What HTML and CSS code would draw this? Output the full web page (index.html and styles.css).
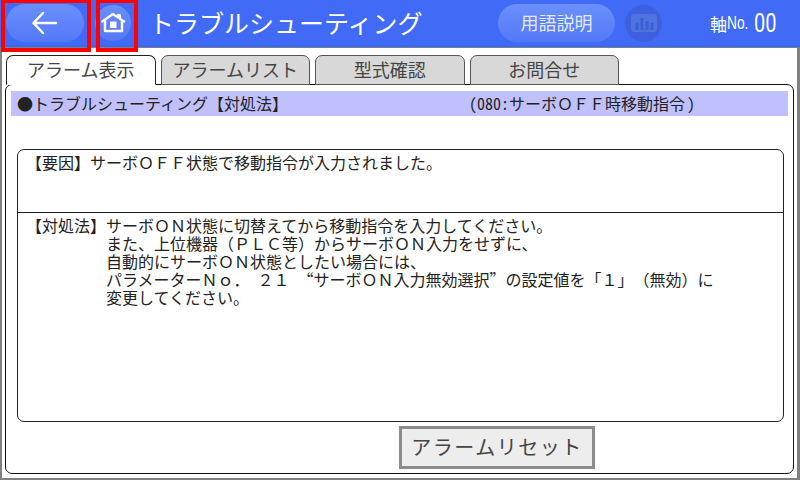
FILE: index.html
```html
<!DOCTYPE html>
<html lang="ja">

<head>
    <meta charset="UTF-8">
    <meta name="viewport" content="width=device-width, initial-scale=1.0">
    <link rel="stylesheet" href="styles.css">
    <title>トラブルシューティング</title>
</head>

<body>

    <div class="screen">
        <div class="header">
            <div class="btnBack">
                <svg width="44" height="30" viewBox="0 0 44 30">
                    <path d="M33 15H11M20 5L10.500 15L20 25" fill="none" stroke="#fff" stroke-width="2.500" stroke-linecap="round" stroke-linejoin="round" />
                </svg>
            </div>
            <div class="btnHome">
                <svg width="30" height="30" viewBox="0 0 30 30">
                    <path d="M3.500 14L15 6L20 9.500V7H22V11L27 14" fill="none" stroke="#fff" stroke-width="2.200" stroke-linejoin="round" />
                    <path d="M7 12.500V23H24V12.500" fill="none" stroke="#fff" stroke-width="2.400" stroke-linejoin="round" />
                    <rect x="12" y="13.500" width="6.500" height="6.500" fill="#fff" />
                </svg>
            </div>
            <div class="title">トラブルシューティング</div>
            <div class="btnWord">用語説明</div>
            <div class="btnChart">
                <svg width="26" height="18" viewBox="0 0 26 18">
                    <rect width="26" height="18" rx="3" fill="#4e72e0" />
                    <path d="M6 9V16M11 4V16M16 7V16M21 9V16" stroke="#3c60d4" stroke-width="3" />
                </svg>
            </div>
            <div class="axis">
                <span class="axisLabel">軸</span>
                <span class="axisNo">No.</span>
                <span class="axisNum">00</span>
            </div>
        </div>

        <div class="mark markBack"></div>
        <div class="mark markHome"></div>

        <div class="tabs">
            <div class="tab active">アラーム表示</div>
            <div class="tab">アラームリスト</div>
            <div class="tab">型式確認</div>
            <div class="tab">お問合せ</div>
        </div>

        <div class="panel">
            <div class="band">
                <span class="bandTitle">●トラブルシューティング【対処法】</span>
                <span class="bandCode"><span class="half">(080:</span>サーボＯＦＦ時移動指令<span class="half close">)</span></span>
            </div>

            <div class="msgBox">
                <div class="cause">【要因】サーボＯＦＦ状態で移動指令が入力されました。</div>
                <div class="remedy">
                    <div class="label">【対処法】</div>
                    <div class="lines">
                        <p>サーボＯＮ状態に切替えてから移動指令を入力してください。</p>
                        <p>また、上位機器（ＰＬＣ等）からサーボＯＮ入力をせずに、</p>
                        <p>自動的にサーボＯＮ状態としたい場合には、</p>
                        <p>パラメーターＮｏ．&ensp;２１&ensp;<span class="full">“</span>サーボＯＮ入力無効選択<span class="full">”</span>の設定値を「１」（無効）に</p>
                        <p>変更してください。</p>
                    </div>
                </div>
            </div>

            <div class="btnReset">アラームリセット</div>
        </div>
    </div>

</body>

</html>
```

FILE: styles.css
```css
* {
    margin: 0;
    padding: 0;
    box-sizing: border-box;
}

body {
    width: 800px;
    height: 480px;
    overflow: hidden;
    background-color: #fff;
    font-family: "Noto Sans CJK JP", sans-serif;
    font-size: 16px;
    color: #222;
    text-spacing-trim: space-all;
}

.screen {
    position: relative;
    width: 800px;
    height: 480px;
    border-left: 2px solid #808080;
    border-right: 3px solid #808080;
    border-bottom: 2px solid #808080;
}

.header {
    display: flex;
    align-items: center;
    height: 48px;
    margin-left: -2px;
    margin-right: -3px;
    padding-bottom: 1px;
    background: linear-gradient(#416bf7 45px, #3568ff 45px);
    border-bottom: 1px solid #808080;
    color: #fff;
}

.btnBack {
    display: flex;
    align-items: center;
    justify-content: center;
    width: 78px;
    height: 38px;
    margin-left: 6px;
    border-radius: 19px;
    background: linear-gradient(#6b8ffb, #5379f8);
}

.btnHome {
    display: flex;
    align-items: center;
    justify-content: center;
    width: 36px;
    height: 36px;
    margin-left: 11px;
    border-radius: 50%;
    background: linear-gradient(#6b8ffb, #5379f8);
}

.title {
    width: 349px;
    margin-left: 18px;
    padding-bottom: 2px;
    font-size: 25px;
    line-height: 32px;
    white-space: nowrap;
}

.btnWord {
    width: 117px;
    height: 38px;
    border-radius: 19px;
    background: linear-gradient(#6b8ffb, #5379f8);
    color: #e4eafe;
    font-size: 18px;
    line-height: 36px;
    text-align: center;
}

.btnChart {
    display: flex;
    align-items: center;
    justify-content: center;
    width: 37px;
    height: 37px;
    margin-left: 10px;
    border-radius: 50%;
    background-color: #3c60e0;
}

.axis {
    display: flex;
    align-items: center;
    margin-left: 48px;
    font-size: 17px;
    white-space: nowrap;
}

.axisNo {
    width: 20px;
    font-family: "Liberation Sans", sans-serif;
    font-size: 19px;
    transform: scaleX(0.72);
    transform-origin: left center;
}

.axisNum {
    width: 24px;
    margin-left: 7px;
    font-family: Roboto, sans-serif;
    font-size: 25px;
    transform: scaleX(0.8);
    transform-origin: left center;
}

/* red annotation frames over the header */
.mark {
    position: absolute;
    top: -1px;
    height: 53px;
    border: 4px solid #f00;
}

.markBack {
    left: -1px;
    width: 90px;
}

.markHome {
    left: 94px;
    width: 42px;
}

.tabs {
    display: flex;
    gap: 5px;
    height: 30px;
    margin-top: 7px;
    padding-left: 4px;
}

.tab {
    width: 149.500px;
    height: 30px;
    border: 1px solid #555;
    border-radius: 7px 7px 0 0;
    background-color: #d8d8d8;
    color: #444;
    font-size: 18px;
    line-height: 27px;
    text-align: center;
}

.tab.active {
    position: relative;
    z-index: 1;
    background-color: #fff;
    border-color: #222;
    border-bottom-color: #fff;
}

.panel {
    height: 390px;
    margin: -1px 3px 0 3px;
    padding: 6px 5px 0 5px;
    border: 1px solid #111;
    border-radius: 7px;
}

.band {
    display: flex;
    height: 25px;
    padding-left: 6px;
    background-color: #c0c0ff;
    font-size: 16px;
    line-height: 24px;
    white-space: nowrap;
}

.bandTitle {
    width: 452px;
}

.half {
    font-feature-settings: "hwid";
}

.close {
    margin-left: 2px;
}

.full {
    font-feature-settings: "fwid";
}

.msgBox {
    height: 273px;
    margin: 33px 4px 0 6px;
    border: 1px solid #222;
    border-radius: 7px;
}

.cause {
    height: 63px;
    padding: 1px 0 0 8px;
    border-bottom: 1px solid #222;
    line-height: 22px;
}

.remedy {
    display: flex;
    padding: 3px 0 0 8px;
}

.label {
    width: 80px;
    line-height: 18px;
}

.lines p {
    line-height: 18px;
    white-space: nowrap;
}

.btnReset {
    width: 196px;
    height: 43px;
    margin: 4px 0 0 388px;
    border: 3px solid #8c8c8c;
    background-color: #ededed;
    color: #444;
    font-size: 20px;
    line-height: 35px;
    letter-spacing: 1.500px;
    text-align: center;
    white-space: nowrap;
}
```
